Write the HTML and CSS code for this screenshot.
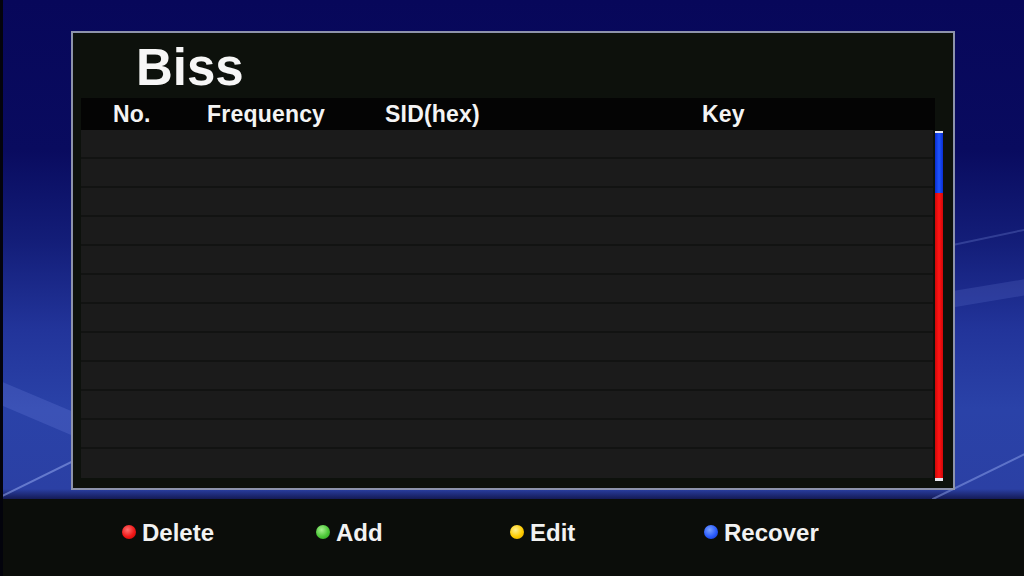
FILE: index.html
```html
<!DOCTYPE html>
<html lang="en">
<head>
<meta charset="utf-8">
<title>Biss</title>
<link rel="stylesheet" href="styles.css">
</head>
<body>
<div class="screen">
  <div class="stage">
    <div class="panel">
      <h1 class="title">Biss</h1>
      <div class="header">
        <span class="col col-no">No.</span>
        <span class="col col-freq">Frequency</span>
        <span class="col col-sid">SID(hex)</span>
        <span class="col col-key">Key</span>
      </div>
      <div class="body">
        <div class="rows">
          <div class="row"></div><div class="row"></div><div class="row"></div>
          <div class="row"></div><div class="row"></div><div class="row"></div>
          <div class="row"></div><div class="row"></div><div class="row"></div>
          <div class="row"></div><div class="row"></div><div class="row"></div>
        </div>
        <div class="scrollbar">
          <div class="cap"></div>
          <div class="thumb"></div>
          <div class="track"></div>
          <div class="cap cap-bottom"></div>
        </div>
      </div>
    </div>
  </div>
  <div class="footer">
    <div class="key"><span class="dot dot-red"></span>Delete</div>
    <div class="key"><span class="dot dot-green"></span>Add</div>
    <div class="key"><span class="dot dot-yellow"></span>Edit</div>
    <div class="key"><span class="dot dot-blue"></span>Recover</div>
  </div>
</div>
</body>
</html>
```
FILE: styles.css
```css
html, body {
  margin: 0;
  padding: 0;
  background: #0b0d0a;
}

.screen {
  width: 1024px;
  height: 576px;
  overflow: hidden;
  display: flex;
  flex-direction: column;
  font-family: "Liberation Sans", Arial, sans-serif;
  font-weight: bold;
  color: #f4f4f4;
  box-sizing: border-box;
  border-left: 3px solid #03030c;
}

.stage {
  height: 499px;
  box-sizing: border-box;
  padding: 31px 0 0 68px;
  background:
    url("data:image/svg+xml;utf8,<svg xmlns='http://www.w3.org/2000/svg' width='1021' height='499'><g fill='none' stroke-linecap='round'><path d='M-5 392 L80 428' stroke='rgba(150,170,255,0.16)' stroke-width='22'/><path d='M-5 498 L170 412' stroke='rgba(170,190,255,0.45)' stroke-width='2'/><path d='M930 499 L1030 450' stroke='rgba(170,190,255,0.40)' stroke-width='2'/><path d='M945 300 L1030 286' stroke='rgba(150,170,255,0.14)' stroke-width='16'/><path d='M945 246 L1030 228' stroke='rgba(160,180,255,0.22)' stroke-width='2'/></g></svg>") no-repeat,
    linear-gradient(180deg, #07075a 0%, #090b5f 30%, #131d78 48%, #22349a 66%, #2a42a8 82%, #2b40a4 98%, #141a55 100%);
}

.panel {
  width: 884px;
  height: 459px;
  box-sizing: border-box;
  border: 2px solid #8d93ab;
  background: #0d110c;
  padding: 0 10px 0 8px;
  display: flex;
  flex-direction: column;
}

.title {
  margin: 0;
  height: 65px;
  box-sizing: border-box;
  padding: 9px 0 0 55px;
  font-size: 51px;
  line-height: 51px;
  font-weight: bold;
  color: #f6f6f6;
}

.header {
  width: 854px;
  height: 32px;
  background: #040404;
  display: flex;
  font-size: 23px;
  line-height: 32px;
  letter-spacing: 0.2px;
  padding-left: 32px;
  box-sizing: border-box;
}

.col-no { width: 94px; }
.col-freq { width: 178px; }
.col-sid { width: 317px; }

.body {
  display: flex;
  align-items: flex-start;
  gap: 2px;
}

.rows {
  width: 852px;
  display: flex;
  flex-direction: column;
}

.row {
  height: 29px;
  box-sizing: border-box;
  background: #1b1b1b;
  border-bottom: 2px solid #121312;
}

.row:last-child {
  border-bottom: none;
}

.scrollbar {
  width: 8px;
  height: 350px;
  margin-top: 1px;
  display: flex;
  flex-direction: column;
}

.cap {
  height: 2px;
  background: #e6e6ee;
}

.cap-bottom {
  height: 3px;
}

.thumb {
  height: 60px;
  background: linear-gradient(90deg, #0a2fd0, #1f55ff 50%, #0a2fd0);
}

.track {
  flex: 1;
  background: linear-gradient(90deg, #d00808, #ff1414 50%, #d00808);
}

.footer {
  flex: 1;
  background: #0b0d0a;
  display: flex;
  padding: 20px 0 0 119px;
  font-size: 24px;
  line-height: 28px;
  box-sizing: border-box;
}

.key {
  width: 194px;
  display: flex;
  align-items: center;
  height: 28px;
  color: #f2f2f2;
}

.dot {
  width: 14px;
  height: 14px;
  border-radius: 50%;
  margin-right: 6px;
  margin-top: -2px;
  flex: none;
}

.dot-red { background: radial-gradient(circle at 40% 35%, #ff7070 0%, #f01818 55%, #c00000 100%); }
.dot-green { background: radial-gradient(circle at 40% 35%, #a8f090 0%, #4cc838 55%, #2a9a20 100%); }
.dot-yellow { background: radial-gradient(circle at 40% 35%, #fff090 0%, #ffcc00 55%, #d8a000 100%); }
.dot-blue { background: radial-gradient(circle at 40% 35%, #7aa0ff 0%, #2a5cff 55%, #1030c0 100%); }
```
